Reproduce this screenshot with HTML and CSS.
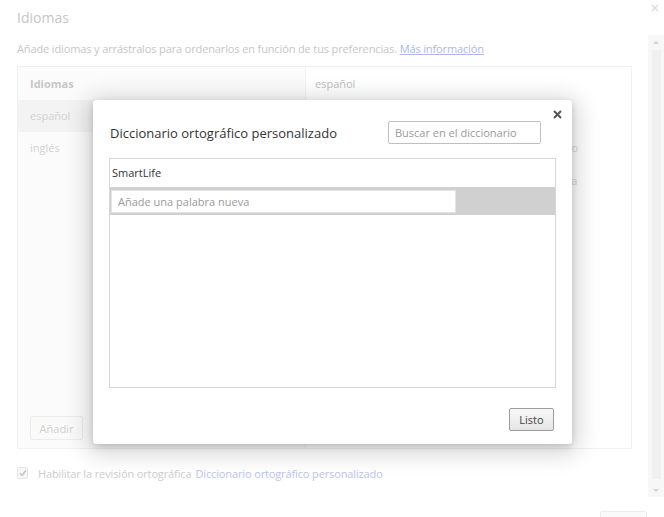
FILE: index.html
```html
<!DOCTYPE html>
<html lang="es">
<head>
<meta charset="utf-8">
<title>Idiomas</title>
<link rel="stylesheet" href="styles.css">
</head>
<body>
<div class="window">
  <div class="main">
    <div class="topbar"><h1 class="title">Idiomas</h1></div>
    <p class="desc">Añade idiomas y arrástralos para ordenarlos en función de tus preferencias. <a class="link" href="#">Más información</a></p>
    <div class="langbox">
      <div class="col-left">
        <div class="col-head">Idiomas</div>
        <div class="lang-row selected">español</div>
        <div class="lang-row">inglés</div>
        <div class="grow"></div>
        <div class="add-wrap"><button class="btn-faded">Añadir</button></div>
      </div>
      <div class="col-right">
        <div class="col-head light">español</div>
        <div class="details">
          <div class="detail detail-a">Este idioma se utiliza como el diccionario ortográfico</div>
          <div class="detail detail-b">Usar este idioma para hacer así la revisión ortográfica</div>
        </div>
      </div>
    </div>
    <div class="spell">
      <span class="check"><svg width="8" height="8" viewBox="0 0 8 8"><path d="M1 4.2 L3.1 6.3 L7 1.6" fill="none" stroke="#c4c4c4" stroke-width="1.6"/></svg></span>
      <span class="spell-text">Habilitar la revisión ortográfica</span>
      <span class="spell-link">Diccionario ortográfico personalizado</span>
    </div>
    <div class="footer"><button class="btn-faded ok" aria-label="Aceptar"></button></div>
  </div>
  <div class="side">
    <div class="close-bg"><svg width="8" height="8" viewBox="0 0 8 8"><path d="M1 1 L7 7 M7 1 L1 7" stroke="#d8d8d8" stroke-width="1.2"/></svg></div>
    <div class="scrollbar">
      <div class="arrow up"></div>
      <div class="thumb"></div>
      <div class="arrow down"></div>
    </div>
  </div>
</div>

<div class="dialog">
  <div class="dlg-close">
    <svg width="9" height="9" viewBox="0 0 9 9"><path d="M1 1 L8 8 M8 1 L1 8" stroke="#555" stroke-width="2"/></svg>
  </div>
  <div class="dlg-head">
    <h2 class="dlg-title">Diccionario ortográfico personalizado</h2>
    <input class="search" type="text" placeholder="Buscar en el diccionario">
  </div>
  <div class="wordlist">
    <div class="word">SmartLife</div>
    <div class="word-new"><input class="new-input" type="text" placeholder="Añade una palabra nueva"></div>
  </div>
  <div class="dlg-foot"><button class="btn">Listo</button></div>
</div>
</body>
</html>
```

FILE: styles.css
```css
* { box-sizing: border-box; }
html, body { margin: 0; padding: 0; }
body {
  width: 664px;
  height: 517px;
  overflow: hidden;
  background: #fff;
  font-family: "Open Sans", "Noto Sans", sans-serif;
  font-size: 11px;
  color: #bdbdbd;
  position: relative;
}
.window {
  display: flex;
  height: 517px;
  overflow: hidden;
}
.main {
  flex: 1;
  display: flex;
  flex-direction: column;
  padding: 0 1px 0 17px;
}
.main > * { flex-shrink: 0; }
.topbar { height: 34px; display: flex; align-items: center; }
.title {
  margin: 0;
  font-size: 14px;
  font-weight: 400;
  color: #c6c6c6;
}
.desc {
  margin: 7px 0 0;
  line-height: 16px;
  color: #c6c6c6;
  white-space: nowrap;
  letter-spacing: -0.13px;
}
.link { color: #a9b9e3; text-decoration: underline; }
.langbox {
  margin: 9px 15px 0 0;
  height: 383px;
  border: 1px solid #f1f1f1;
  display: flex;
}
.col-left {
  width: 288px;
  background: #fbfbfc;
  border-right: 1px solid #f1f1f1;
  display: flex;
  flex-direction: column;
}
.col-head {
  height: 33px;
  line-height: 33px;
  padding-left: 12px;
  font-weight: 700;
  color: #c6c6c6;
}
.col-head.light { font-weight: 400; padding-left: 9px; color: #bdbdbd; }
.lang-row {
  height: 32px;
  line-height: 32px;
  padding-left: 12px;
  color: #d2d2d2;
}
.lang-row.selected { background: #f3f3f3; }
.grow { flex: 1; }
.add-wrap { padding: 0 0 8px 12px; }
.btn-faded {
  font-family: inherit;
  font-size: 11px;
  color: #d0d0d0;
  background: #fafafa;
  border: 1px solid #ececec;
  border-radius: 2px;
  height: 24px;
  width: 53px;
  padding: 0;
}
.col-right {
  flex: 1;
  display: flex;
  flex-direction: column;
  overflow: hidden;
}
.details { padding-top: 31px; }
.detail {
  padding-left: 9px;
  height: 33px;
  line-height: 33px;
  white-space: nowrap;
  color: #d8d8d8;
}
.detail-a { word-spacing: -0.8px; }
.detail-b { word-spacing: -1.6px; }
.spell {
  margin-top: 15px;
  height: 18px;
  display: flex;
  align-items: center;
  white-space: nowrap;
  letter-spacing: -0.13px;
}
.check {
  width: 11px;
  height: 12px;
  border: 1px solid #e6e6e6;
  border-radius: 2px;
  background: #f7f7f7;
  display: flex;
  align-items: center;
  justify-content: center;
  margin-right: 10px;
}
.spell-text { color: #cdcdcd; margin-right: 4px; }
.spell-link { color: #b8c5ea; }
.footer {
  margin-top: 29px;
  display: flex;
  justify-content: flex-end;
}
.ok { width: 47px; }
.side {
  width: 16px;
  display: flex;
  flex-direction: column;
}
.close-bg {
  height: 35px;
  padding: 4px 0 0 3px;
  display: flex;
  align-items: flex-start;
}
.scrollbar {
  height: 462px;
  background: #f7f7f7;
  display: flex;
  flex-direction: column;
  align-items: center;
}
.arrow { width: 16px; height: 14px; position: relative; }
.arrow::after {
  content: "";
  position: absolute;
  left: 5px;
  top: 6px;
  border-left: 3px solid transparent;
  border-right: 3px solid transparent;
}
.arrow.up::after { border-bottom: 3px solid #d2d2d2; }
.arrow.down::after { border-top: 3px solid #d2d2d2; }
.thumb { flex: 1; width: 9px; background: #f0f0f0; margin: 1px 0 4px; }

/* Dialog */
.dialog {
  position: absolute;
  left: 93px;
  top: 100px;
  width: 479px;
  height: 344px;
  background: #fff;
  border-radius: 3px;
  box-shadow: 0 4px 23px 5px rgba(0,0,0,0.18), 0 2px 6px rgba(0,0,0,0.15);
  padding: 21px 16px 0;
  display: flex;
  flex-direction: column;
  color: #333;
}
.dlg-close {
  position: absolute;
  right: 10px;
  top: 10px;
  width: 9px;
  height: 9px;
  display: flex;
}
.dlg-head {
  display: flex;
  align-items: center;
  height: 23px;
  padding: 0 15px 0 1px;
}
.dlg-title {
  flex: 1;
  margin: 0;
  font-size: 13px;
  font-weight: 400;
  color: #333;
}
.search {
  width: 153px;
  height: 23px;
  border: 1px solid #bfbfbf;
  border-radius: 2px;
  font-family: inherit;
  font-size: 11px;
  padding: 0 6px;
  color: #333;
}
.search::placeholder, .new-input::placeholder { color: #9a9a9a; }
.wordlist {
  margin-top: 14px;
  height: 230px;
  border: 1px solid #d6d6d6;
  display: flex;
  flex-direction: column;
}
.word {
  height: 28px;
  line-height: 28px;
  padding-left: 2px;
  font-size: 11px;
  color: #333;
}
.word-new {
  height: 28px;
  background: #d0d0d0;
  padding: 3px 0 2px 1px;
}
.new-input {
  width: 345px;
  height: 23px;
  border: 1px solid #e4e4e4;
  font-family: inherit;
  font-size: 11px;
  padding: 0 6px;
  background: #fff;
}
.dlg-foot {
  margin-top: 20px;
  display: flex;
  justify-content: flex-end;
  padding-right: 2px;
}
.btn {
  width: 45px;
  height: 23px;
  font-family: inherit;
  font-size: 11px;
  color: #444;
  background: linear-gradient(#f8f8f8, #e6e6e6);
  border: 1px solid #9c9c9c;
  border-radius: 2px;
  padding: 0;
}
```
